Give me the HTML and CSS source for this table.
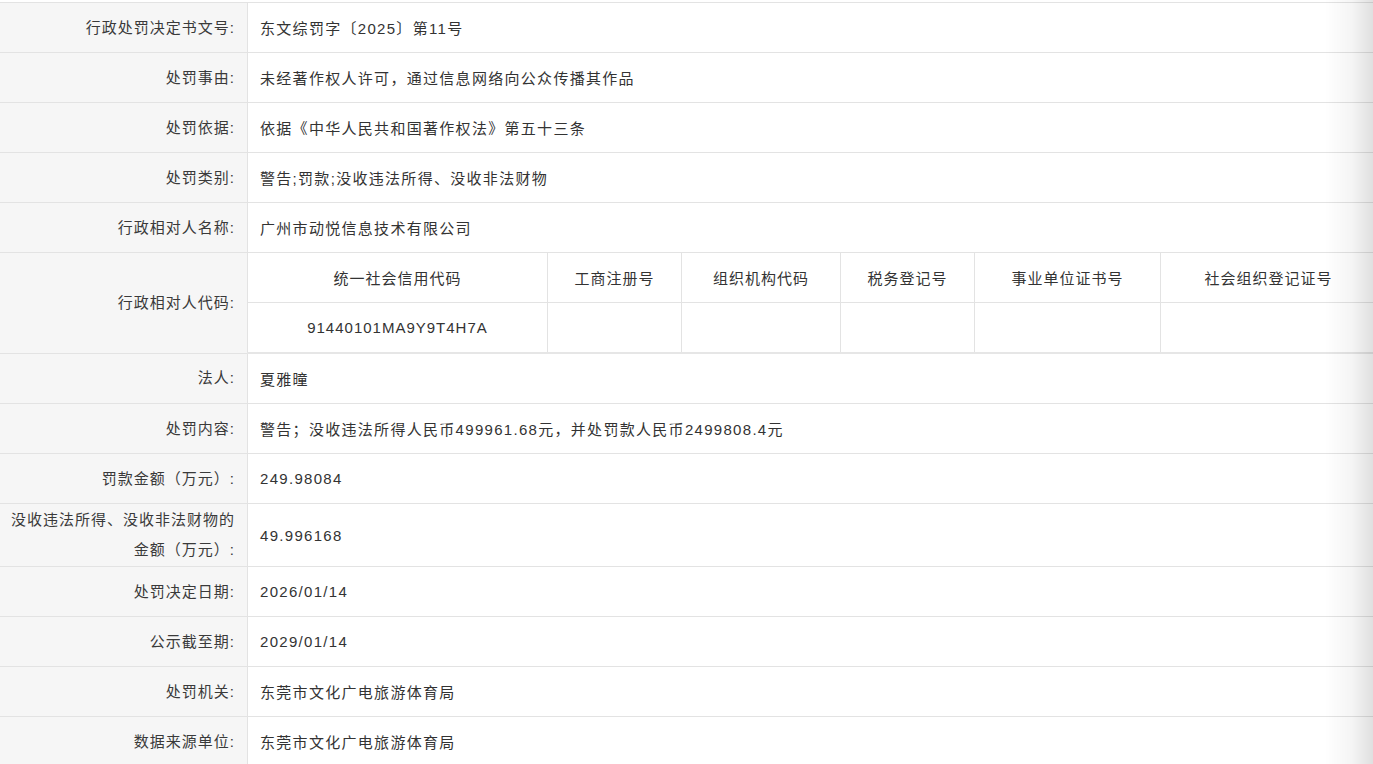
FILE: index.html
```html
<!DOCTYPE html>
<html lang="zh-CN">
<head>
    <meta charset="UTF-8">
    <meta name="viewport" content="width=device-width, initial-scale=1.0">
    <title>行政处罚信息</title>
    <link rel="stylesheet" href="styles.css">
</head>
<body>
    <table class="info">
        <tr>
            <th>行政处罚决定书文号:</th>
            <td>东文综罚字〔2025〕第11号</td>
        </tr>
        <tr>
            <th>处罚事由:</th>
            <td>未经著作权人许可，通过信息网络向公众传播其作品</td>
        </tr>
        <tr>
            <th>处罚依据:</th>
            <td>依据《中华人民共和国著作权法》第五十三条</td>
        </tr>
        <tr>
            <th>处罚类别:</th>
            <td>警告;罚款;没收违法所得、没收非法财物</td>
        </tr>
        <tr>
            <th>行政相对人名称:</th>
            <td>广州市动悦信息技术有限公司</td>
        </tr>
        <tr>
            <th>行政相对人代码:</th>
            <td class="nested-cell">
                <table class="codes">
                    <tr>
                        <td class="c1">统一社会信用代码</td>
                        <td class="c2">工商注册号</td>
                        <td class="c3">组织机构代码</td>
                        <td class="c4">税务登记号</td>
                        <td class="c5">事业单位证书号</td>
                        <td>社会组织登记证号</td>
                    </tr>
                    <tr>
                        <td>91440101MA9Y9T4H7A</td>
                        <td></td>
                        <td></td>
                        <td></td>
                        <td></td>
                        <td></td>
                    </tr>
                </table>
            </td>
        </tr>
        <tr>
            <th>法人:</th>
            <td>夏雅曈</td>
        </tr>
        <tr>
            <th>处罚内容:</th>
            <td>警告；没收违法所得人民币499961.68元，并处罚款人民币2499808.4元</td>
        </tr>
        <tr>
            <th>罚款金额（万元）:</th>
            <td>249.98084</td>
        </tr>
        <tr class="tall">
            <th>没收违法所得、没收非法财物的金额（万元）:</th>
            <td>49.996168</td>
        </tr>
        <tr>
            <th>处罚决定日期:</th>
            <td>2026/01/14</td>
        </tr>
        <tr>
            <th>公示截至期:</th>
            <td>2029/01/14</td>
        </tr>
        <tr>
            <th>处罚机关:</th>
            <td>东莞市文化广电旅游体育局</td>
        </tr>
        <tr>
            <th>数据来源单位:</th>
            <td>东莞市文化广电旅游体育局</td>
        </tr>
    </table>

    <!-- page fold shadow on the right edge -->
    <div class="edge-shadow"></div>
</body>
</html>
```

FILE: styles.css
```css
body {
    margin: 0;
    padding-top: 2px;
    background: #ffffff;
    font-family: "Liberation Sans", "Noto Sans CJK SC", sans-serif;
    font-size: 15px;
    letter-spacing: 1.3px;
    color: #333;
    overflow: hidden;
}
.info {
    width: 1376px;
    border-collapse: collapse;
    table-layout: fixed;
}
.info > tbody > tr > th,
.info > tbody > tr > td {
    border-top: 1px solid #e3e3e3;
    border-bottom: 1px solid #e3e3e3;
    height: 49px;
    padding: 0;
    vertical-align: middle;
}
.info > tbody > tr > th {
    width: 228px;
    height: 47px;
    padding: 1px 12px 1px 7px;
    background: #f6f6f6;
    border-right: 1px solid #e3e3e3;
    font-weight: normal;
    text-align: right;
    color: #3a3a3a;
    line-height: 30px;
    letter-spacing: 1px;
}
.info > tbody > tr > td {
    padding-left: 12px;
    background: #fff;
}
.info > tbody > tr.tall > th {
    height: 60px;
}
.info > tbody > tr.tall > td {
    height: 62px;
}
.info > tbody > tr > td.nested-cell {
    padding: 0;
    border-bottom: 2px solid #e6e6e6;
}
.codes {
    width: 100%;
    border-collapse: collapse;
    table-layout: fixed;
}
.codes td {
    height: 49px;
    padding: 0;
    text-align: center;
    letter-spacing: 1px;
    border-right: 1px solid #e3e3e3;
    border-bottom: 1px solid #e3e3e3;
}
.codes tr:last-child td {
    border-bottom: none;
}
.codes td:last-child {
    border-right: none;
}
.codes .c1 { width: 299px; }
.codes .c2 { width: 133px; }
.codes .c3 { width: 158px; }
.codes .c4 { width: 133px; }
.codes .c5 { width: 185px; }
.edge-shadow {
    position: fixed;
    top: 0;
    right: 0;
    width: 48px;
    height: 100%;
    background: linear-gradient(to right, rgba(0, 0, 0, 0), rgba(0, 0, 0, 0.04) 55%, rgba(0, 0, 0, 0.12));
    pointer-events: none;
}
```
